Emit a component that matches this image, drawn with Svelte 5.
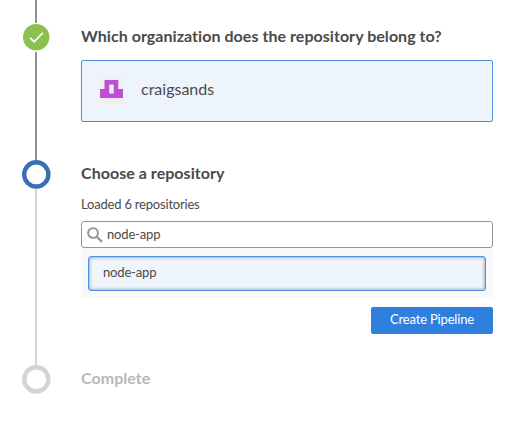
<script>
  let query = $state('node-app');
</script>

<main class="steps">
  <section class="step first">
    <div class="rail">
      <span class="line lead"></span>
      <svg class="marker" width="29" height="29" viewBox="0 0 29 29">
        <circle cx="14.2" cy="14.2" r="13.2" fill="#8cc04f" />
        <path d="M8.2 14.9l3.9 3.9 8.8-9" fill="none" stroke="#fff" stroke-width="1.7" />
      </svg>
      <span class="line dark"></span>
    </div>
    <div class="content">
      <h2>Which organization does the repository belong to?</h2>
      <button class="org">
        <svg class="avatar" width="26" height="26" viewBox="0 0 26 26">
          <rect width="26" height="26" fill="#f0f0f0" />
          <path d="M6.5 2h13.800v9h4.700v9H2v-9h4.500zM11.200 6.500v9h4.500v-9z" fill="#bd4fd3" fill-rule="evenodd" />
        </svg>
        <span class="name">craigsands</span>
      </button>
    </div>
  </section>

  <section class="step second">
    <div class="rail">
      <svg class="marker" width="29" height="29" viewBox="0 0 29 29">
        <circle cx="14.3" cy="14.4" r="12.1" fill="#fff" stroke="#3a70b2" stroke-width="4.400" />
      </svg>
      <span class="line light"></span>
    </div>
    <div class="content">
      <h2>Choose a repository</h2>
      <p>Loaded 6 repositories</p>
      <label class="search">
        <svg width="16" height="16" viewBox="0 0 16 16" fill="none" stroke="#949494">
          <circle cx="6" cy="6" r="4.900" stroke-width="1.900" />
          <path d="M9.700 9.700l5.200 5.200" stroke-width="2.200" />
        </svg>
        <input type="text" bind:value={query} aria-label="Search repositories" />
      </label>
      <div class="list">
        <button class="repo">node-app</button>
      </div>
      <button class="create">Create Pipeline</button>
    </div>
  </section>

  <section class="step third">
    <div class="rail">
      <svg class="marker" width="29" height="29" viewBox="0 0 29 29">
        <circle cx="14.3" cy="14.300" r="12.1" fill="#fff" stroke="#d4d4d4" stroke-width="4.400" />
      </svg>
    </div>
    <div class="content">
      <h2>Complete</h2>
    </div>
  </section>
</main>

<style>
  :global(body) {
    margin: 0;
    background: #fff;
  }
  .steps {
    box-sizing: border-box;
    width: 522px;
    height: 426px;
    overflow: hidden;
    font-family: Lato, sans-serif;
    color: #4a4a4a;
  }
  .steps * {
    box-sizing: border-box;
  }
  .step {
    display: flex;
  }
  .first {
    height: 160px;
  }
  .second {
    height: 205px;
  }
  .rail {
    flex: none;
    display: flex;
    flex-direction: column;
    width: 59px;
    margin-left: 22px;
  }
  .marker {
    display: block;
    flex: none;
  }
  .line {
    flex: 1;
    width: 2px;
    margin-left: 13px;
    background: #929292;
  }
  .lead {
    flex: none;
    height: 23px;
  }
  .light {
    background: #d4d4d4;
  }
  .content {
    display: flex;
    flex-direction: column;
    width: 412px;
  }
  h2 {
    margin: 0;
    font-size: 16px;
    line-height: 20px;
    font-weight: 700;
    letter-spacing: 0.045px;
    white-space: nowrap;
  }
  button {
    margin: 0;
    padding: 0;
    font: inherit;
    color: inherit;
  }
  .first h2 {
    margin-top: 26px;
  }
  .org {
    display: flex;
    align-items: center;
    gap: 17px;
    height: 62px;
    margin-top: 14px;
    padding: 0 0 2px 16px;
    border: 1px solid #4a90e2;
    border-radius: 2px;
    background: #eef4fb;
    font-size: 16px;
  }
  .avatar {
    margin-top: 2px;
  }
  .name {
    padding-bottom: 3px;
  }
  .second h2 {
    margin-top: 3px;
  }
  p {
    margin: 13px 0 8px;
    font-size: 13px;
    line-height: 17px;
    letter-spacing: -0.2px;
  }
  .search {
    display: flex;
    align-items: center;
    gap: 4px;
    height: 27px;
    padding-left: 5px;
    border: 1px solid #949494;
    border-radius: 3px;
    background: #fff;
  }
  input {
    flex: 1;
    min-width: 0;
    padding: 0;
    border: 0;
    outline: 0;
    background: transparent;
    font: 13px/17px Lato, sans-serif;
    letter-spacing: -0.17px;
    color: #4a4a4a;
  }
  .list {
    height: 50px;
    padding: 8px 7px 7px;
    background: #f8f9fa;
  }
  .repo {
    display: block;
    width: 100%;
    height: 35px;
    padding: 0 0 3px 14px;
    border: 1px solid #4a90e2;
    border-radius: 3px;
    background: #eef5fb;
    box-shadow: inset 0 0 3px 1px #aab0b6;
    font-size: 13px;
    letter-spacing: -0.17px;
    text-align: left;
  }
  .create {
    align-self: flex-end;
    width: 122px;
    height: 27px;
    margin-top: 9px;
    padding-bottom: 3px;
    border: 0;
    border-radius: 2px;
    background: #2f7fde;
    color: #fff;
    font-size: 13px;
    letter-spacing: -0.17px;
  }
  .third h2 {
    margin-top: 3px;
    color: #b8b8b8;
  }
</style>
